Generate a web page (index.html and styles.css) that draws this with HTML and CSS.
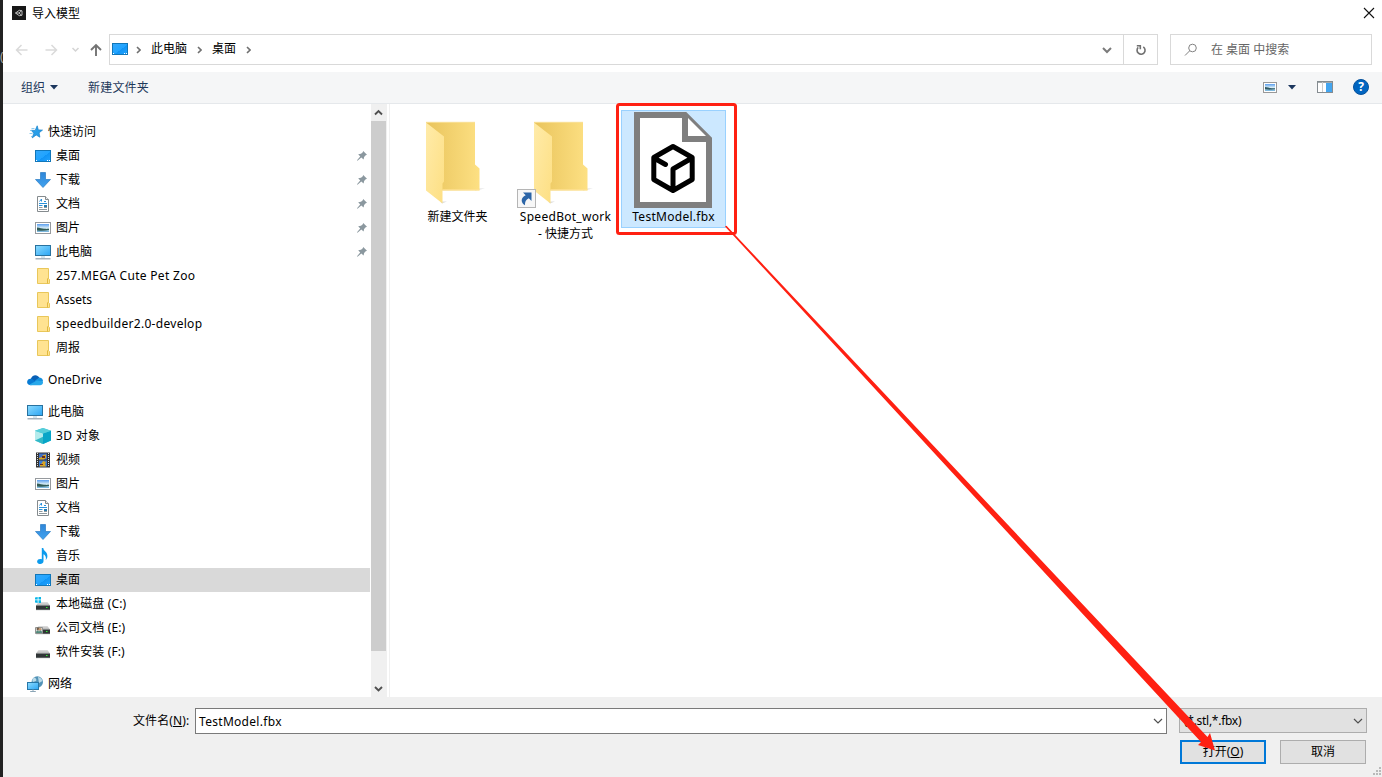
FILE: index.html
```html
<!DOCTYPE html>
<html lang="zh-CN">
<head>
<meta charset="utf-8">
<title>导入模型</title>
<link rel="stylesheet" href="styles.css">
</head>
<body>
<svg class="defs" width="0" height="0" aria-hidden="true">
  <defs>
    <linearGradient id="gScreen" x1="0" y1="0" x2="1" y2="1"><stop offset="0" stop-color="#35a8fb"/><stop offset=".55" stop-color="#20a4ff"/><stop offset=".56" stop-color="#1194f5"/><stop offset="1" stop-color="#22a4ff"/></linearGradient>
    <linearGradient id="gPc" x1="0" y1="0" x2="1" y2="1"><stop offset="0" stop-color="#8ddcff"/><stop offset="1" stop-color="#2ba5f4"/></linearGradient>
    <linearGradient id="gArrow" x1="0" y1="0" x2="0" y2="1"><stop offset="0" stop-color="#2f86d8"/><stop offset="1" stop-color="#40a2ef"/></linearGradient>
    <linearGradient id="gSky" x1="0" y1="0" x2="0" y2="1"><stop offset="0" stop-color="#5b9ff0"/><stop offset=".5" stop-color="#d7ecf5"/><stop offset=".75" stop-color="#a9d3e6"/><stop offset="1" stop-color="#6fb0dc"/></linearGradient>
    <linearGradient id="gFold" x1="0" y1="0" x2="1" y2="0"><stop offset="0" stop-color="#e9c45c"/><stop offset="1" stop-color="#fde083"/></linearGradient>
    <linearGradient id="gFlap" x1="0" y1="0" x2="1" y2="1"><stop offset="0" stop-color="#ffeba9"/><stop offset="1" stop-color="#fddf83"/></linearGradient>
    <linearGradient id="gDisk" x1="0" y1="0" x2="0" y2="1"><stop offset="0" stop-color="#e0e0e0"/><stop offset="1" stop-color="#b4b4b4"/></linearGradient>
  </defs>
  <symbol id="desktop" viewBox="0 0 16 16"><rect x=".5" y="2.5" width="15" height="11" fill="url(#gScreen)" stroke="#1176b8"/><path d="M1 12.5h1m10 0h1m1 0h1" stroke="#fff"/></symbol>
  <symbol id="star" viewBox="0 0 16 16"><path d="M10.2 1.8l1.1 4.1 4.2.2-3.4 2.7.8 4.4-3.7-2.2-4 2.9 1.6-4.7-2.6-2.9 4 .1z" fill="#289ee8" stroke="#1681cb" stroke-width=".7"/><path d="M4.5 4.5h3M3 6.5h2M2.5 9.5h3M4 12.5h1" stroke="#70bce9" stroke-width=".8"/></symbol>
  <symbol id="download" viewBox="0 0 16 16"><path d="M5.5.5h5v7h5L8 15.5.5 7.5h5z" fill="url(#gArrow)" stroke="#287bc4" stroke-width=".7"/></symbol>
  <symbol id="document" viewBox="0 0 16 16"><path d="M2.5.5h8l3 3v12h-11z" fill="#fff" stroke="#858b8e"/><path d="M10.5.5v3h3" fill="#eee" stroke="#858b8e"/><path d="M4.5 5.5L6.5 3v2.500M9 5.500h2M4 7.500h8M4 9.500h3.500" fill="none" stroke="#2992dc"/><path d="M4 11.500h3.500M4 13.500h8M9 11.500h3" stroke="#8d989e"/><path d="M9 9h3v2H9z" fill="#267aac"/></symbol>
  <symbol id="picture" viewBox="0 0 16 16"><rect x=".5" y="2.500" width="15" height="11" fill="#fff" stroke="#969a9e"/><rect x="2" y="4" width="12" height="8" fill="url(#gSky)"/><path d="M2 7.500c3 .2 5 1.200 7 1.300 2 .2 3 .2 5 0v1.200c-4 .9-8 .8-12 .5z" fill="#315b56"/></symbol>
  <symbol id="computer" viewBox="0 0 16 16"><rect x=".5" y="1.500" width="15" height="10" fill="url(#gPc)" stroke="#29729f"/><path d="M6 13h4" stroke="#a7c8dc"/><path d="M.5 14.800h15" stroke="#909fac" stroke-width="1.200"/></symbol>
  <symbol id="folder" viewBox="0 0 16 16"><path d="M2.500.5h11v10l1 1v4h-12z" fill="#ffe391" stroke="#e9c75a"/><path d="M12.500 15.500v-4.800h1" fill="none" stroke="#e1b93f"/></symbol>
  <symbol id="onedrive" viewBox="0 0 16 16"><path d="M3.500 7.500C5 3 10 1.700 12.500 6L8 10z" fill="#0960b6"/><path d="M8 8.500l4.500-3c2.400.1 3.500 2 3.500 4L10 11z" fill="#1490df"/><path d="M.1 10C.2 7.200 3 6 5.400 7.200L11 11l-7 2.200C1.500 13.200 0 11.800.1 10z" fill="#087bd4"/><path d="M2 12.800l8-4.300 5.800 1c.7 2-.8 3.800-2.800 3.800H4z" fill="#28a8ea"/></symbol>
  <symbol id="cube" viewBox="0 0 16 16"><path d="M0 2.700L8 0l8 2.700v9.800L8 16l-8-3.500z" fill="#40c6d8"/><path d="M0 2.700l8 2.800V16l-8-3.500z" fill="#b4ebec"/><path d="M16 2.700L8 5.500V16l8-3.500z" fill="#08a5c7"/><path d="M8 0l8 2.700-8 2.800-8-2.800z" fill="#56ced9"/><path d="M0 12.500l8-3.700V16z" fill="#31b8c7"/></symbol>
  <symbol id="video" viewBox="0 0 16 16"><path d="M1 .5h14v15H1z" fill="#333"/><path d="M4 1.500h8v6H4z" fill="#3f6fc6"/><path d="M4 8.500h8v6H4z" fill="#3a7bd0"/><path d="M4 6l3-1 1-2 3-.5V6l-2 1.500H4zM5 13l2-2 1-2 3 1-1 2 1 2.500H5z" fill="#d8a422"/><path d="M7 4h3v2H7zM5 12h3v1H5z" fill="#622d29"/><path d="M2.500 1v14M13.500 1v14" stroke="#ddd" stroke-dasharray="1 1"/></symbol>
  <symbol id="music" viewBox="0 0 16 16"><path d="M6.800 0h1.500c.1 3.300 4.800 3.700 4 9.200-.4 1.600-1.200 2.400-1.600 2.800.8-3.400-.7-5-2.200-5.800v7C8.200 16.800 2 17 2.100 13.500c.2-2.300 2.600-3 4.700-2.200z" fill="#0c9bed"/></symbol>
  <symbol id="disk" viewBox="0 0 16 16"><path d="M3.500 6h9l2.500 3.500H1z" fill="url(#gDisk)"/><path d="M1 9.500h14V14H1z" fill="#303536"/><path d="M1 9.500h14M1 13.700h14" stroke="#7b8080" stroke-width=".7"/><path d="M11 11.500h1.500" stroke="#31ef35"/></symbol>
  <symbol id="windisk" viewBox="0 0 16 16"><use href="#disk"/><path d="M0 1h6v6H0z" fill="#fff"/><path d="M0 1.500L2.700 1v2.500H0zM3.500 1H6v2.500H3.500zM0 4.300h2.700V7L0 6.500zM3.500 4.300H6V7H3.500z" fill="#08b6e8"/></symbol>
  <symbol id="shareddisk" viewBox="0 0 16 16"><use href="#disk"/><path d="M.5 7.500h7v6h-7z" fill="#ddd" stroke="#919391"/><circle cx="3" cy="9" r="1.400" fill="#725c48"/><circle cx="5" cy="9.300" r="1.400" fill="#c69970"/><path d="M1 13c.2-3 2.500-3 3-1 .5-2 3-2 3 1z" fill="#518a7b"/></symbol>
  <symbol id="network" viewBox="0 0 16 16"><circle cx="10.300" cy="6" r="5.700" fill="#5293b7"/><path d="M7 1.600c2 .5 3 2.200 2 3.300L6 6c-1-1-1-3 1-4.400zM11 1c2 .2 4 2 4.500 4L12 7z" fill="#b9dae9"/><rect x=".5" y="6.500" width="11" height="7" fill="url(#gPc)" stroke="#2777a8"/><path d="M6 13.500v1.500M3.200 15.500h5.600" stroke="#8ba5b6"/></symbol>
  <symbol id="pin" viewBox="0 0 10 10"><path d="M6.200 0L10 3.700 8.700 4.200 7.100 5.900 6.600 8.600 4.300 6.600.5 9.800 0 9.300l3.200-3.800L1.200 3.300 4 2.800 5.800 1.300z" fill="#8b989f"/></symbol>
  <symbol id="bigfolder" viewBox="0 0 64 86"><path d="M50 67h10l-10 2zM15 80h7l-5 2z" fill="#ddd"/><path d="M1 1h49v42l4.500 4v22H17L1 40z" fill="url(#gFold)"/><path d="M1 1l18 14v45l-1.500 2v20L1 69z" fill="url(#gFlap)"/><path d="M1 .7h49" stroke="#f8d982"/><path d="M17.500 68.300h37" stroke="#ffe295"/></symbol>
</svg>

<div class="window">
  <header class="titlebar">
    <svg class="appicon" viewBox="0 0 14 14"><path d="M0 0h14v14H0z" fill="#171717"/><path d="M3.500 7l3.800-2.700L10 4.800v4.400l-2.700.5zM3.500 7H7l2.500-2.200M7 7l2.500 2.200" fill="none" stroke="#ccc" stroke-width=".9"/></svg>
    <span>导入模型</span>
    <svg class="close" viewBox="0 0 12 12"><path d="M1 1l10 10M11 1L1 11" stroke="#111" stroke-width="1.100"/></svg>
  </header>

  <nav class="address">
    <div class="arrows">
      <svg viewBox="0 0 80 16"><path d="M12.500 8H1.500m5-5l-5 5 5 5M30.500 8h11m-5-5l5 5-5 5" fill="none" stroke="#dadada" stroke-width="1.500"/><path d="M57.500 6l3 3 3-3" fill="none" stroke="#d4d4d4" stroke-width="1.500"/></svg>
      <svg class="up" viewBox="0 0 12 14"><path d="M6 13V2M1 7l5-5 5 5" fill="none" stroke="#737373" stroke-width="1.900"/></svg>
    </div>
    <div class="path">
      <svg class="i16"><use href="#desktop"/></svg>
      <svg class="crumb" viewBox="0 0 5 8"><path d="M1 1l3 3-3 3"/></svg><span>此电脑</span>
      <svg class="crumb" viewBox="0 0 5 8"><path d="M1 1l3 3-3 3"/></svg><span>桌面</span>
      <svg class="crumb" viewBox="0 0 5 8"><path d="M1 1l3 3-3 3"/></svg>
      <svg class="drop" viewBox="0 0 10 8"><path d="M1 2l4 4 4-4" fill="none" stroke="#7b7b7b" stroke-width="2"/></svg>
      <div class="refresh"><svg viewBox="0 0 12 12"><path d="M8.300 2.900A4 4 0 1 1 3.200 3.400M1.800 1.800h3.500v3.500" fill="none" stroke="#707070" stroke-width="1.600"/></svg></div>
    </div>
    <div class="search"><svg viewBox="0 0 14 14"><circle cx="8.500" cy="5" r="3.800" fill="none" stroke="#828282"/><path d="M5.600 7.900L1 12.500" stroke="#828282"/></svg><span>在 桌面 中搜索</span></div>
  </nav>

  <div class="toolbar">
    <span>组织</span><svg class="tri" viewBox="0 0 8 5"><path d="M0 0h8L4 4.500z" fill="#1b365d"/></svg>
    <span class="newfolder">新建文件夹</span>
    <svg class="view" viewBox="0 0 14 11"><rect x=".5" y=".5" width="13" height="10" fill="#fff" stroke="#999"/><rect x="2" y="2" width="10" height="7" fill="url(#gSky)"/><path d="M2 5c3 0 5 1.500 10 1.300v1c-4 .5-7 .4-10 0z" fill="#315b66"/></svg>
    <svg class="tri second" viewBox="0 0 8 5"><path d="M0 0h8L4 4.500z" fill="#1b365d"/></svg>
    <svg class="pane" viewBox="0 0 16 12"><rect x=".5" y=".5" width="15" height="11" fill="#fff" stroke="#858c91"/><path d="M0 1h16" stroke="#858c91" stroke-width="1.500"/><path d="M5.500 1v10" stroke="#ccc"/><path d="M9 2h6v9H9z" fill="#43a5ef"/></svg>
    <span class="help">?</span>
  </div>

  <main class="content">
    <aside class="tree">
      <div class="row top"><svg class="i16"><use href="#star"/></svg><span>快速访问</span></div>
      <div class="row"><svg class="i16"><use href="#desktop"/></svg><span>桌面</span><svg class="pin"><use href="#pin"/></svg></div>
      <div class="row"><svg class="i16"><use href="#download"/></svg><span>下载</span><svg class="pin"><use href="#pin"/></svg></div>
      <div class="row"><svg class="i16"><use href="#document"/></svg><span>文档</span><svg class="pin"><use href="#pin"/></svg></div>
      <div class="row"><svg class="i16"><use href="#picture"/></svg><span>图片</span><svg class="pin"><use href="#pin"/></svg></div>
      <div class="row"><svg class="i16"><use href="#computer"/></svg><span>此电脑</span><svg class="pin"><use href="#pin"/></svg></div>
      <div class="row"><svg class="i16"><use href="#folder"/></svg><span class="latin">257.MEGA Cute Pet Zoo</span></div>
      <div class="row"><svg class="i16"><use href="#folder"/></svg><span>Assets</span></div>
      <div class="row"><svg class="i16"><use href="#folder"/></svg><span class="latin">speedbuilder2.0-develop</span></div>
      <div class="row"><svg class="i16"><use href="#folder"/></svg><span>周报</span></div>
      <div class="row top group"><svg class="i16"><use href="#onedrive"/></svg><span class="onedrive">OneDrive</span></div>
      <div class="row top group"><svg class="i16"><use href="#computer"/></svg><span>此电脑</span></div>
      <div class="row"><svg class="i16"><use href="#cube"/></svg><span class="latin">3D 对象</span></div>
      <div class="row"><svg class="i16"><use href="#video"/></svg><span>视频</span></div>
      <div class="row"><svg class="i16"><use href="#picture"/></svg><span>图片</span></div>
      <div class="row"><svg class="i16"><use href="#document"/></svg><span>文档</span></div>
      <div class="row"><svg class="i16"><use href="#download"/></svg><span>下载</span></div>
      <div class="row"><svg class="i16"><use href="#music"/></svg><span>音乐</span></div>
      <div class="row selected"><svg class="i16"><use href="#desktop"/></svg><span>桌面</span></div>
      <div class="row"><svg class="i16"><use href="#windisk"/></svg><span class="drive">本地磁盘 (C:)</span></div>
      <div class="row"><svg class="i16"><use href="#shareddisk"/></svg><span class="drive">公司文档 (E:)</span></div>
      <div class="row"><svg class="i16"><use href="#disk"/></svg><span class="drive">软件安装 (F:)</span></div>
      <div class="row top group"><svg class="i16"><use href="#network"/></svg><span>网络</span></div>
    </aside>
    <div class="scrollbar">
      <svg viewBox="0 0 15 17"><path d="M4 10.500L7.500 7l3.500 3.500" fill="none" stroke="#505050" stroke-width="1.900"/></svg>
      <div class="thumb"></div>
      <svg class="down" viewBox="0 0 15 17"><path d="M4 7l3.500 3.500L11 7" fill="none" stroke="#505050" stroke-width="1.900"/></svg>
    </div>
    <section class="files">
      <div class="file"><svg class="folderpic" viewBox="0 0 64 86"><use href="#bigfolder"/></svg><span>新建文件夹</span></div>
      <div class="file"><svg class="folderpic" viewBox="0 0 64 86"><use href="#bigfolder"/></svg>
        <svg class="shortcut" viewBox="0 0 19 19"><rect x=".5" y=".5" width="18" height="18" fill="#f7f7f7" stroke="#b5b5b5"/><path d="M6 3.500h8.500V12l-2.700-2.700c-3 1.500-4 3.500-3.800 7C3.500 13.500 3.500 9 8.700 6.300z" fill="#2c65a7"/></svg>
        <span class="wide">SpeedBot_work</span><span>- 快捷方式</span></div>
      <div class="file chosen"><svg class="model" viewBox="0 0 78 96"><path d="M3 3h48l24 24v66H3z" fill="#fff" stroke="#7f7f7f" stroke-width="6"/><path d="M51 3v24h24" fill="#fff" stroke="#7f7f7f" stroke-width="6"/><path d="M39 34.500l19.200 11v22L39 78.500l-19.200-11v-22zM20 46l11.500 6.500M58 46L39 57v21" fill="none" stroke="#000" stroke-width="5" stroke-linejoin="round" stroke-linecap="round"/></svg><span class="wide">TestModel.fbx</span></div>
    </section>
  </main>

  <footer class="footer">
    <div class="line">
      <label>文件名(<u>N</u>):</label>
      <div class="filename"><span>TestModel.fbx</span><svg class="chev" viewBox="0 0 10 6"><path d="M1 1l4 4 4-4"/></svg></div>
      <div class="filter"><span>(*.stl,*.fbx)</span><svg class="chev" viewBox="0 0 10 6"><path d="M1 1l4 4 4-4"/></svg></div>
    </div>
    <div class="buttons"><div class="button primary">打开(<u>O</u>)</div><div class="button">取消</div></div>
  </footer>
</div>
<div class="edge"><span>(</span></div>
<svg class="grip" viewBox="0 0 8 8"><path d="M6 0h2v2H6zM3 3h2v2H3zM6 3h2v2H6zM0 6h2v2H0zM3 6h2v2H3zM6 6h2v2H6z" fill="#b9b9b9"/></svg>
<svg class="annotation" viewBox="0 0 1382 777"><rect x="617.500" y="104.500" width="118" height="129" rx="2" fill="none" stroke="#ff2012" stroke-width="3"/><path d="M725 226.500l1.500-.8L1207.500 737l2.500-4 5 17.500-17-5.500 3-3z" fill="#ff2012"/></svg>
</body>
</html>
```
FILE: styles.css
```css
* { box-sizing: border-box; }
body { margin: 0; width: 1382px; height: 777px; overflow: hidden; background: #fff; color: #000; font: 12px/16px "Noto Sans", "Noto Sans CJK SC", sans-serif; }
svg { display: block; flex: none; }
span, label { white-space: nowrap; }
.defs { position: absolute; }
.window { width: 1382px; height: 777px; padding-left: 3px; display: flex; flex-direction: column; }
.edge { position: absolute; left: 0; top: 0; width: 3px; height: 777px; overflow: hidden; background: #222; color: #aaa; padding-top: 49px; }
.i16 { width: 16px; height: 16px; }

.titlebar { height: 28px; display: flex; align-items: center; padding: 0 7px 2px 9px; }
.titlebar span { padding-top: 1px; }
.appicon { width: 14px; height: 14px; margin-right: 6px; }
.close { width: 12px; height: 12px; margin-left: auto; }

.address { height: 44px; display: flex; align-items: flex-start; padding: 6px 10px 0 12px; }
.arrows { width: 94px; height: 31px; display: flex; align-items: center; }
.arrows svg { width: 80px; height: 16px; margin-right: -5px; }
.arrows .up { width: 12px; height: 14px; margin: 0; }
.path { width: 1049px; height: 31px; border: 1px solid #d9d9d9; display: flex; align-items: center; padding-left: 2px; }
.path span { padding-bottom: 2px; }
.path .i16 { margin-top: -1px; }
.crumb { width: 5px; height: 8px; margin: 0 10px 0 8px; }
.crumb path { fill: none; stroke: #707070; stroke-width: 1.6; }
.path span + .crumb { margin-left: 10px; }
.drop { width: 10px; height: 8px; margin-left: auto; margin-right: 11px; }
.refresh { width: 34px; height: 29px; border-left: 1px solid #d9d9d9; display: flex; align-items: center; justify-content: center; }
.refresh svg { width: 12px; height: 12px; }
.search { width: 202px; height: 31px; margin-left: 12px; border: 1px solid #d9d9d9; display: flex; align-items: center; color: #666; padding-left: 13px; }
.search svg { width: 14px; height: 14px; margin-right: 13px; }

.toolbar { height: 32px; background: #f5f6f7; border-bottom: 1px solid #e5e8eb; display: flex; align-items: center; padding: 0 13px 1px 18px; color: #1e395b; }
.toolbar > span:not(.help) { padding-top: 1px; }
.tri { width: 8px; height: 5px; margin-left: 5px; }
.newfolder { margin-left: 30px; letter-spacing: .2px; }
.view { width: 14px; height: 11px; margin-left: auto; }
.tri.second { margin-left: 11px; }
.pane { width: 16px; height: 12px; margin-left: 21px; }
.help { width: 16px; height: 16px; margin-left: 20px; border-radius: 50%; background: #0065c1; border: 1px solid #07529c; color: #fff; font-weight: bold; line-height: 14px; text-align: center; }

.content { height: 593px; display: flex; }
.tree { width: 368px; padding-top: 16px; }
.row { width: 367px; height: 24px; display: flex; align-items: center; padding-left: 32px; gap: 5px; }
.row span { padding-bottom: 1px; }
.row.top { padding-left: 24px; }
.row.group { margin-top: 8px; }
.row.selected { background: #d9d9d9; }
.latin { letter-spacing: .3px; }
.onedrive { letter-spacing: .1px; }
.drive { letter-spacing: .12px; }
.pin { width: 10px; height: 10px; margin: -1px 3px 0 auto; }
.scrollbar { width: 16px; background: #f0f0f0; display: flex; flex-direction: column; }
.scrollbar svg { width: 15px; height: 17px; }
.thumb { width: 15px; height: 530px; background: #cdcdcd; }
.scrollbar .down { margin-top: auto; }
.files { margin-left: 2px; border-left: 1px solid #f0f0f0; padding: 6px 0 0 15px; display: flex; gap: 3px; }
.file { position: relative; width: 105px; height: 118px; display: flex; flex-direction: column; align-items: center; padding-top: 11px; line-height: 17px; }
.folderpic { width: 64px; height: 87px; margin-right: 1px; }
.shortcut { position: absolute; width: 19px; height: 19px; left: 4px; top: 79px; }
.chosen { background: #cce8ff; border: 1px solid #99d1ff; padding-top: 1px; }
.model { width: 78px; height: 96px; margin-right: 1px; }
.wide { letter-spacing: .28px; }

.footer { height: 80px; background: #f0f0f0; padding: 11px 15px 0 130px; }
.line { display: flex; align-items: flex-start; height: 26px; }
.line label { width: 62px; padding-top: 5px; letter-spacing: .1px; }
.filename, .filter { display: flex; align-items: center; justify-content: space-between; }
.filename { width: 972px; height: 26px; background: #fff; border: 1px solid #7a7a7a; padding: 0 3px 0 3px; }
.filename span { padding-top: 2px; letter-spacing: .3px; }
.filter { width: 188px; height: 25px; margin-left: 12px; background: #e1e1e1; border: 1px solid #adadad; padding: 0 3px 0 4px; }
.filter span { letter-spacing: -.28px; }
.chev { width: 10px; height: 6px; }
.chev path { fill: none; stroke: #505050; stroke-width: 1.2; }
.buttons { display: flex; justify-content: flex-end; gap: 14px; margin: 6px 1px 0 0; }
.button { width: 86px; height: 24px; background: #e1e1e1; border: 1px solid #adadad; text-align: center; line-height: 21px; }
.primary { border: 2px solid #0078d7; line-height: 19px; }
.grip { position: absolute; left: 1373px; top: 767px; width: 8px; height: 8px; }
.annotation { position: absolute; left: 0; top: 0; width: 1382px; height: 777px; pointer-events: none; }
```
